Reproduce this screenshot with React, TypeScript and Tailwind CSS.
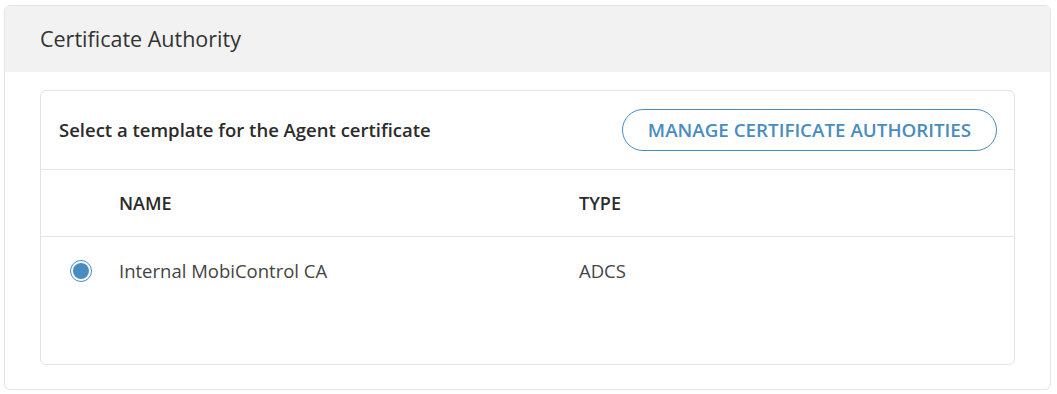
export default function App() {
  return (
    <div className="w-[1057px] h-[394px] bg-white pt-[5px] pl-[4px] pr-[6px]" style={{ fontFamily: "'Open Sans', 'Noto Sans', sans-serif" }}>
      <div className="h-[385px] border border-[#e3e3e3] rounded-[6px] overflow-hidden">
        <div className="h-[66px] bg-[#f2f2f2] flex items-center pl-[35px] text-[21.5px] text-[#333]">
          Certificate Authority
        </div>
        <div className="px-[35px] pt-[18px]">
          <div className="h-[275px] border border-[#e3e3e3] rounded-[6px]">
            <div className="h-[79px] border-b border-[#e6e6e6] flex items-center justify-between pl-[18px] pr-[17px]">
              <div className="text-[18.5px] font-semibold text-[#2b2b2b]">Select a template for the Agent certificate</div>
              <button className="h-[42px] w-[375px] rounded-full border border-[#4a8cc0] text-[#4a8cc0] text-[18.8px] font-semibold">
                MANAGE CERTIFICATE AUTHORITIES
              </button>
            </div>
            <div className="h-[67px] border-b border-[#e6e6e6] flex items-center text-[18px] font-semibold text-[#2b2b2b]">
              <div className="w-[538px] pl-[78px]">NAME</div>
              <div>TYPE</div>
            </div>
            <div className="h-[67px] flex items-center text-[18.5px] text-[#444]">
              <div className="w-[78px] pl-[29px] flex items-center">
                <div className="w-[22px] h-[22px] rounded-full border border-[#4a8cc0] p-[2px]">
                  <div className="w-full h-full rounded-full bg-[#4a8cc0]" />
                </div>
              </div>
              <div className="w-[460px]">Internal MobiControl CA</div>
              <div>ADCS</div>
            </div>
          </div>
        </div>
      </div>
    </div>
  );
}
